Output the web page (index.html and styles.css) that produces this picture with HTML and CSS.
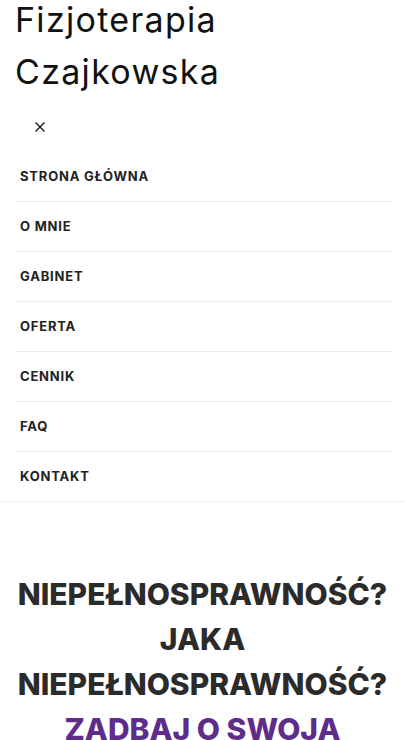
FILE: index.html
```html
<!DOCTYPE html>
<html lang="pl">
<head>
    <meta charset="UTF-8">
    <meta name="viewport" content="width=device-width, initial-scale=1.0">
    <title>Fizjoterapia Czajkowska</title>
    <link rel="stylesheet" href="styles.css">
</head>
<body>
    <header class="site-header">
        <div class="site-title">Fizjoterapia Czajkowska</div>
        <button class="menu-toggle" aria-label="Zamknij menu">
            <svg width="10" height="10" viewBox="0 0 10 10">
                <path d="M0.5 0.5 L9.5 9.5 M9.5 0.5 L0.5 9.5" stroke="#111" stroke-width="1.3" fill="none"/>
            </svg>
        </button>
        <nav class="main-nav">
            <ul>
                <li><a href="#">Strona główna</a></li>
                <li><a href="#">O mnie</a></li>
                <li><a href="#">Gabinet</a></li>
                <li><a href="#">Oferta</a></li>
                <li><a href="#">Cennik</a></li>
                <li><a href="#">FAQ</a></li>
                <li><a href="#">Kontakt</a></li>
            </ul>
        </nav>
    </header>

    <main class="hero">
        <h1>Niepełnosprawność? Jaka niepełnosprawność?
            <span class="accent">Zadbaj o swoją</span>
        </h1>
    </main>
</body>
</html>
```

FILE: styles.css
```css
body {
    margin: 0;
    font-family: Inter, "Noto Sans", sans-serif;
    color: #222;
    background: #fff;
}

.site-header {
    border-bottom: 1px solid #f0f0f0;
}

.site-title {
    width: 260px;
    padding: 0 0 0 15px;
    margin-top: -6px;
    font-size: 34px;
    line-height: 52px;
    font-weight: 400;
    letter-spacing: 1.3px;
    color: #111;
}

.menu-toggle {
    display: flex;
    align-items: center;
    justify-content: center;
    width: 40px;
    height: 40px;
    margin: 9px 0 5px 20px;
    padding: 0;
    border: none;
    background: none;
}

.main-nav ul {
    list-style: none;
    margin: 0 13px 0 16px;
    padding: 0;
}

.main-nav li {
    border-bottom: 1px solid #ececec;
}

.main-nav li:last-child {
    border-bottom: none;
}

.main-nav a {
    display: block;
    height: 49px;
    line-height: 49px;
    padding-left: 4px;
    font-size: 13px;
    font-weight: 700;
    letter-spacing: 0.8px;
    text-transform: uppercase;
    text-decoration: none;
    color: #222;
}

.hero {
    padding: 70px 10px 0;
    text-align: center;
}

.hero h1 {
    margin: 0;
    font-size: 30px;
    line-height: 45px;
    font-weight: 800;
    letter-spacing: 0;
    text-transform: uppercase;
    color: #2b2b2b;
}

.hero .accent {
    color: #5e2d8c;
}
```
